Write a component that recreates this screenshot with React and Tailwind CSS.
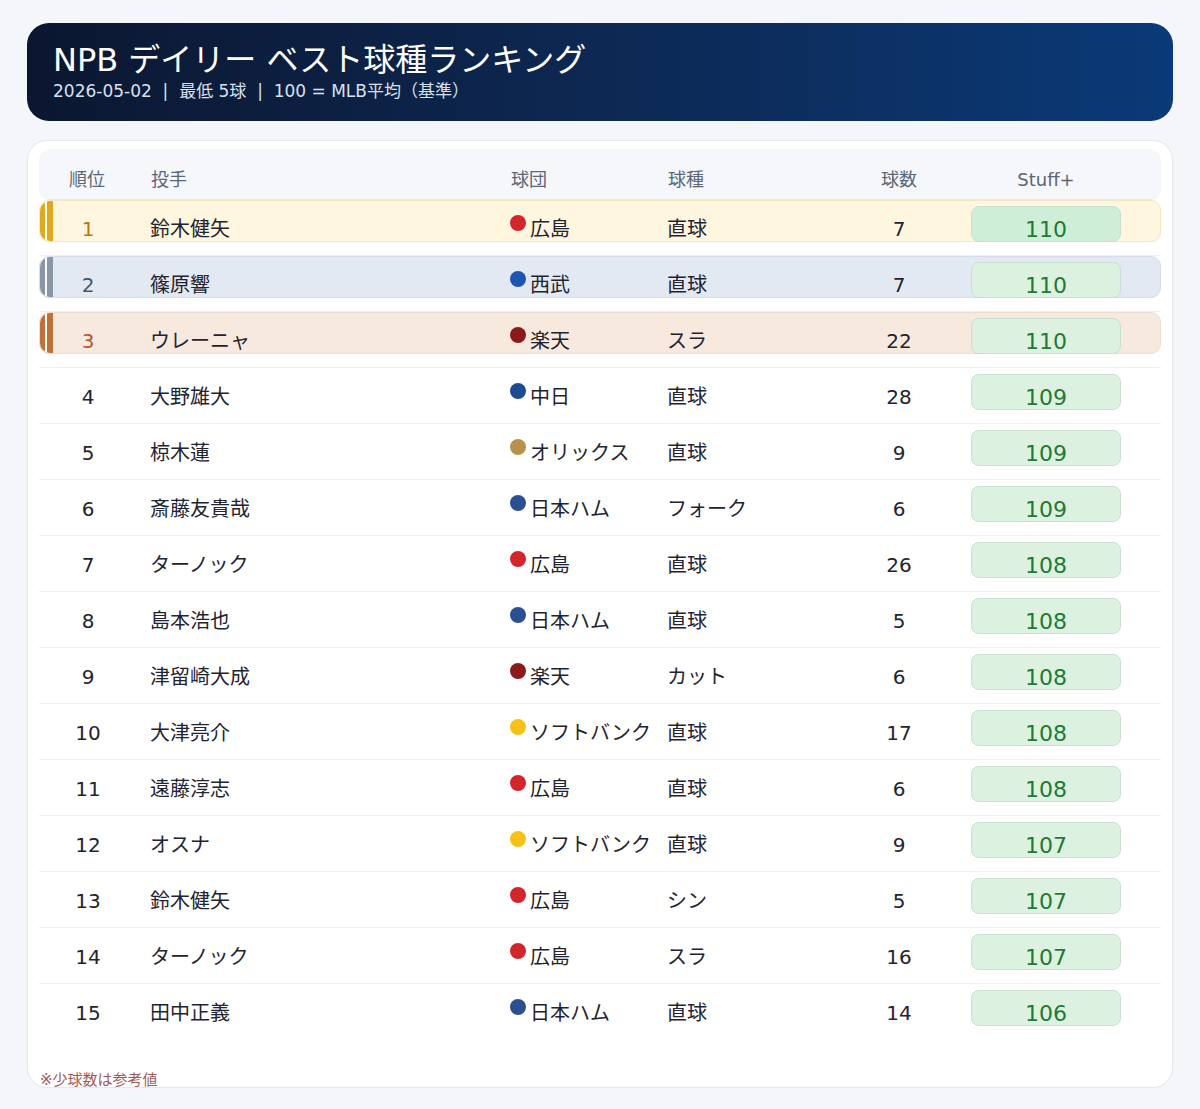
const rows = [
  [1,"鈴木健矢","広島","直球",7,110],
  [2,"篠原響","西武","直球",7,110],
  [3,"ウレーニャ","楽天","スラ",22,110],
  [4,"大野雄大","中日","直球",28,109],
  [5,"椋木蓮","オリックス","直球",9,109],
  [6,"斎藤友貴哉","日本ハム","フォーク",6,109],
  [7,"ターノック","広島","直球",26,108],
  [8,"島本浩也","日本ハム","直球",5,108],
  [9,"津留崎大成","楽天","カット",6,108],
  [10,"大津亮介","ソフトバンク","直球",17,108],
  [11,"遠藤淳志","広島","直球",6,108],
  [12,"オスナ","ソフトバンク","直球",9,107],
  [13,"鈴木健矢","広島","シン",5,107],
  [14,"ターノック","広島","スラ",16,107],
  [15,"田中正義","日本ハム","直球",14,106],
];
const dot = {"広島":"bg-[#d0262c]","西武":"bg-[#1d55b0]","楽天":"bg-[#8b1a1a]","中日":"bg-[#1e4a8f]","オリックス":"bg-[#b8924a]","日本ハム":"bg-[#2b4f8f]","ソフトバンク":"bg-[#f7c117]"};
const medal = {
  1:{band:"bg-[#fff6df] border border-[#f3e6c2]",bar:"bg-[#e0a820]",num:"text-[#b07a10]"},
  2:{band:"bg-[#e3e9f2] border border-[#d6dde8]",bar:"bg-[#8a95a5]",num:"text-[#4a5568]"},
  3:{band:"bg-[#f8e9df] border border-[#eedccf]",bar:"bg-[#c0703a]",num:"text-[#b8562a]"},
};
const F = {fontFamily:'"DejaVu Sans","Noto Sans CJK JP",sans-serif'};

function Row({r, last}) {
  const [rank,name,team,pitch,n,s] = r;
  const m = medal[rank];
  return (
    <div className={`h-[56px] ${last ? "" : "border-b border-[#edf0f4]"}`}>
      <div className={`h-[42px] flex items-end rounded-[10px] ${m ? m.band : "border border-transparent"} text-[20px] leading-[24px] text-[#1f2430] relative`}>
        {m && (
          <div className="absolute left-0 top-0 bottom-0 w-[14px] flex rounded-l-[10px] overflow-hidden">
            <div className={`w-[5px] ${m.bar}`}></div>
            <div className="w-[2px] bg-white/70"></div>
            <div className={`w-[6px] ${m.bar}`}></div>
          </div>
        )}
        <div className={`w-[96px] text-center ${m ? m.num : ""}`}>{rank}</div>
        <div className="w-[14px]"></div>
        <div className="w-[360px]">{name}</div>
        <div className="w-[157px] flex items-end">
          <span className={`w-[16px] h-[16px] rounded-full ${dot[team]} mb-[10px] mr-[4px] shrink-0`}></span>
          <span className="whitespace-nowrap">{team}</span>
        </div>
        <div className="w-[160px]">{pitch}</div>
        <div className="w-[144px] text-center">{n}</div>
        <div className="w-[150px] h-[36px] self-start mt-[4px] rounded-[8px] border border-[#c9dfd0] bg-[#dcf1e0] text-[#1f7a36] text-[22px] text-center flex items-end justify-center leading-[26px] relative top-[1px]"
          style={rank===1?{background:"#cfeed8"}:undefined}>
          <span className="relative top-[2px]">{s}</span>
        </div>
      </div>
    </div>
  );
}

export default function App() {
  return (
    <div className="min-h-[1109px] bg-[#f4f6fa] px-[27px] pt-[23px]" style={F}>
      <div className="h-[98px] rounded-[22px] bg-gradient-to-r from-[#0b1730] to-[#0a3a78] px-[26px] pt-[16px] text-white">
        <div className="text-[32px] leading-[42px]">NPB デイリー ベスト球種ランキング</div>
        <div className="text-[17px] leading-[22px] text-[#d8e0ee] mt-[-1px] whitespace-pre">2026-05-02  |  最低 5球  |  100 = MLB平均（基準）</div>
      </div>
      <div className="mt-[19px] h-[948px] bg-white rounded-[20px] border border-[#e3e7ee] px-[11px] pt-[8px] relative">
        <div className="h-[51px] bg-[#f5f7fb] rounded-[12px] flex items-end pb-[6px] text-[18px] text-[#5d6675] border-b border-[#e7ebf1]">
          <div className="w-[96px] text-center">順位</div>
          <div className="w-[16px]"></div>
          <div className="w-[360px]">投手</div>
          <div className="w-[157px]">球団</div>
          <div className="w-[160px]">球種</div>
          <div className="w-[142px] text-center">球数</div>
          <div className="w-[152px] text-center">Stuff+</div>
        </div>
        {rows.map((r,i) => <Row key={r[0]} r={r} last={i===rows.length-1} />)}
        <div className="absolute left-[12px] bottom-[-4px] text-[15px] text-[#a05a5a]">※少球数は参考値</div>
      </div>
    </div>
  );
}
